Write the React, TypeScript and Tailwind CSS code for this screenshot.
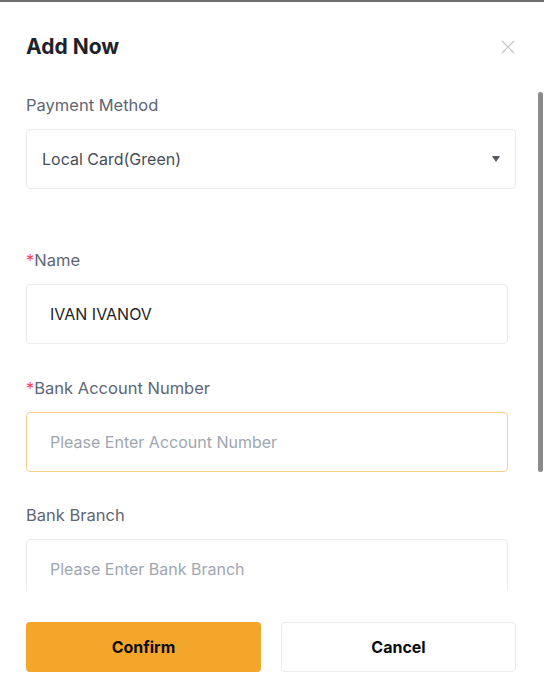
import React from "react";

const labelCls = "text-[16.5px] leading-6 text-[#5e6673]";

function Field({ label, required, children }: { label: string; required?: boolean; children: React.ReactNode }) {
  return (
    <div className="mb-8">
      <div className={labelCls}>
        {required && <span className="text-[#f6465d]">*</span>}
        {label}
      </div>
      <div className="mt-3">{children}</div>
    </div>
  );
}

export default function App() {
  return (
    <div
      className="relative w-[544px] h-[699px] bg-white border-t-2 border-[#6e6e6e] overflow-hidden"
      style={{ fontFamily: "Inter, 'Noto Sans', sans-serif" }}
    >
      {/* header */}
      <div className="flex items-center justify-between pl-[26px] pr-[29px] pt-[31px]">
        <h2 className="text-[21px] leading-7 font-bold text-[#1e2329]">Add Now</h2>
        <button className="w-[14px] h-[14px] text-[#c4c4c4]">
          <svg viewBox="0 0 14 14" width="14" height="14" fill="none" stroke="currentColor" strokeWidth="1.2">
            <path d="M1 1L13 13M13 1L1 13" />
          </svg>
        </button>
      </div>

      {/* scroll body */}
      <div className="relative mt-[19px] h-[511px] overflow-hidden">
        <div className="pl-[26px] pr-[28px] pt-[13px]">
          <div className={labelCls}>Payment Method</div>
          <div className="mt-3 h-[60px] flex items-center justify-between pl-[15px] pr-4 border border-[#eaecef] rounded-[4px] text-[16px] text-[#474d57]">
            <span>Local Card(Green)</span>
            <svg width="8" height="6" viewBox="0 0 8 6" className="mr-[-1px]">
              <path d="M0 0H8L4 6Z" fill="#555a61" />
            </svg>
          </div>

          <div className="h-[59px]" />

          <div className="pr-2">
            <Field label="Name" required>
              <div className="h-[60px] flex items-center pl-[23px] pr-6 border border-[#eaecef] rounded-[4px] text-[16px] text-[#1e2329]">
                IVAN IVANOV
              </div>
            </Field>
            <Field label="Bank Account Number" required>
              <div className="h-[60px] flex items-center pl-[23px] pr-6 border border-[#f5cf8a] rounded-[4px] text-[16px] text-[#a0a6b1]">
                Please Enter Account Number
              </div>
            </Field>
            <div className="-mt-px">
              <Field label="Bank Branch">
                <div className="h-[60px] flex items-center pl-[23px] pr-6 border border-[#eaecef] rounded-[4px] text-[16px] text-[#a0a6b1]">
                  Please Enter Bank Branch
                </div>
              </Field>
            </div>
          </div>
        </div>
        {/* scrollbar thumb */}
        <div className="absolute right-[1px] top-[12px] w-[5px] h-[380px] rounded-[3px] bg-[#8a8a8a]" />
      </div>

      {/* footer */}
      <div className="grid grid-cols-2 gap-5 pl-[26px] pr-[28px] mt-[31px]">
        <button className="h-[50px] rounded-[4px] bg-[#f4a62b] text-[16px] font-bold text-[#0b0e11]">Confirm</button>
        <button className="h-[50px] rounded-[4px] border border-[#eaecef] bg-white text-[16px] font-bold text-[#0b0e11]">
          Cancel
        </button>
      </div>
    </div>
  );
}
